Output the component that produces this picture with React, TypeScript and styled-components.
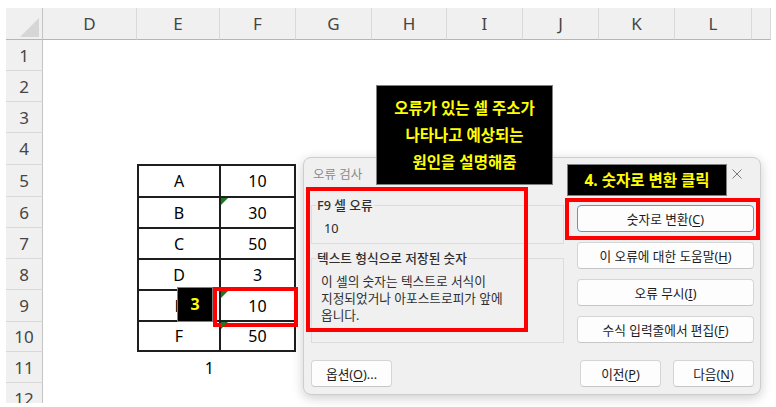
import React from "react";
import styled, { createGlobalStyle } from "styled-components";

const GlobalStyle = createGlobalStyle`
  html, body { margin: 0; padding: 0; background: #ffffff; }
  body { font-family: "Noto Sans", "Noto Sans CJK KR", sans-serif; }
  * { box-sizing: border-box; }
`;

const COLS = ["D", "E", "F", "G", "H", "I", "J", "K", "L", ""];
const ROW_H = [31, 31, 31, 32, 32, 31, 31, 31, 32, 30, 31, 31];

const Page = styled.div`
  position: relative;
  width: 776px;
  height: 407px;
  overflow: hidden;
  background: #ffffff;
  padding: 8px 0 0 6px;
`;

const Sheet = styled.div`
  display: grid;
  grid-template-columns: 37px 94px 83px 76px 76px 75px 76px 76px 76px 77px 19px;
  grid-template-rows: 32px ${ROW_H.map((h) => h + "px").join(" ")};
  width: 765px;
  height: 395px;
  overflow: hidden;
  font-family: "Noto Sans", sans-serif;
`;

const Corner = styled.div`
  grid-column: 1;
  grid-row: 1;
  background: #f0f0f0;
  border-right: 1px solid #c4c4c4;
  border-bottom: 1px solid #b5b5b5;
  display: flex;
  align-items: flex-end;
  justify-content: flex-end;
  padding: 0 3px 2px 0;
`;

const ColHeader = styled.div<{ $col: number }>`
  grid-column: ${(p) => p.$col};
  grid-row: 1;
  background: #f0f0f0;
  border-bottom: 1px solid #b5b5b5;
  border-right: 1px solid #d9d9d9;
  display: flex;
  align-items: center;
  justify-content: center;
  font-size: 17px;
  color: #454545;
`;

const RowHeader = styled.div<{ $row: number }>`
  grid-column: 1;
  grid-row: ${(p) => p.$row};
  background: #f0f0f0;
  border-right: 1px solid #c4c4c4;
  border-bottom: 1px solid #d9d9d9;
  display: flex;
  align-items: center;
  justify-content: center;
  font-size: 17px;
  color: #454545;
`;

const DataTable = styled.div`
  grid-column: 3 / 5;
  grid-row: 6 / 12;
  margin-top: -1px;
  display: grid;
  grid-template-columns: 82px 75px;
  grid-template-rows: 32px 31px 31px 31px 31px 30px;
  border-top: 2px solid #1e1e1e;
  border-left: 2px solid #1e1e1e;
`;

const Cell = styled.div<{ $flag?: boolean }>`
  position: relative;
  border-right: 2px solid #1e1e1e;
  border-bottom: 2px solid #1e1e1e;
  display: flex;
  align-items: center;
  justify-content: center;
  font-size: 16px;
  color: #000;
  &::before {
    content: "";
    display: ${(p) => (p.$flag ? "block" : "none")};
    position: absolute;
    left: 0;
    top: 0;
    width: 0;
    height: 0;
    z-index: 3;
    border-top: 7px solid #1f7a1f;
    border-right: 7px solid transparent;
  }
`;

const Total = styled.div`
  grid-column: 3;
  grid-row: 12;
  display: flex;
  align-items: center;
  justify-content: flex-end;
  padding-right: 6px;
  font-size: 16px;
  color: #000;
`;

const Dialog = styled.div`
  position: absolute;
  left: 303px;
  top: 157px;
  width: 458px;
  height: 238px;
  background: #f0f0f0;
  border: 1px solid #cdcdcd;
  border-radius: 8px;
  box-shadow: 0 3px 12px rgba(0, 0, 0, 0.2);
  display: flex;
  flex-direction: column;
  font-family: "Noto Sans", "Noto Sans CJK KR", sans-serif;
  font-size: 12.7px;
  color: #1f1f1f;
  z-index: 1;
`;

const TitleBar = styled.div`
  height: 31px;
  display: flex;
  align-items: center;
  justify-content: space-between;
  padding: 0 18px 0 9px;
  color: #8a8a8a;
  font-size: 12.5px;
`;

const Body = styled.div`
  display: grid;
  grid-template-columns: 253px 177px;
  column-gap: 13px;
  padding: 0 6px 0 7px;
  margin-top: 16px;
`;

const LeftCol = styled.div`
  display: flex;
  flex-direction: column;
  gap: 14px;
`;

const GroupBox = styled.div<{ $h: number }>`
  height: ${(p) => p.$h}px;
  border: 1px solid #dcdcdc;
`;

const Legend = styled.div`
  width: fit-content;
  margin: -9px 0 0 4px;
  padding: 0 1px;
  background: #f0f0f0;
  line-height: 17px;
  font-weight: 500;
  color: #2e2e2e;
`;

const Value = styled.div`
  margin: 6px 0 0 12px;
  line-height: 17px;
  color: #2a2a2a;
`;

const Description = styled.div`
  margin: 6px 0 0 9px;
  line-height: 17px;
  color: #2f2f2f;
`;

const ButtonStack = styled.div`
  display: flex;
  flex-direction: column;
  gap: 10px;
`;

const Button = styled.button<{ $primary?: boolean }>`
  height: 27px;
  width: 100%;
  padding: 0;
  background: #fdfdfd;
  border: 1px solid ${(p) => (p.$primary ? "#4f9be0" : "#d5d5d5")};
  border-bottom-color: ${(p) => (p.$primary ? "#4f9be0" : "#c6c6c6")};
  border-radius: 4px;
  font: inherit;
  color: #1b1b1b;
  display: flex;
  align-items: center;
  justify-content: center;
`;

const FooterButton = styled(Button)`
  width: 81px;
`;

const Footer = styled.div`
  margin-top: auto;
  display: flex;
  justify-content: space-between;
  padding: 0 6px 7px 7px;
`;

const FooterGroup = styled.div`
  display: flex;
  gap: 12px;
`;

const Accel = styled.span`
  text-decoration: underline;
  text-underline-offset: 2px;
`;

const Callout = styled.div<{ $x: number; $y: number; $w: number; $h: number; $size: number }>`
  position: absolute;
  left: ${(p) => p.$x}px;
  top: ${(p) => p.$y}px;
  width: ${(p) => p.$w}px;
  height: ${(p) => p.$h}px;
  background: #000;
  border: 1px solid #808080;
  color: #ffff00;
  font-family: "Noto Sans", "Noto Sans CJK KR", sans-serif;
  font-weight: 700;
  font-size: ${(p) => p.$size}px;
  line-height: 27px;
  display: flex;
  flex-direction: column;
  align-items: center;
  justify-content: center;
  white-space: nowrap;
  z-index: 3;
`;

const RedBox = styled.div<{ $x: number; $y: number; $w: number; $h: number }>`
  position: absolute;
  left: ${(p) => p.$x}px;
  top: ${(p) => p.$y}px;
  width: ${(p) => p.$w}px;
  height: ${(p) => p.$h}px;
  border: 4px solid #ff0000;
  z-index: 2;
`;

const tableRows: [string, string, boolean][] = [
  ["A", "10", false],
  ["B", "30", true],
  ["C", "50", false],
  ["D", "3", false],
  ["E", "10", true],
  ["F", "50", true],
];

export default function App() {
  return (
    <>
      <GlobalStyle />
      <Page>
        <Sheet>
          <Corner>
            <svg width="19" height="19" viewBox="0 0 19 19">
              <polygon points="19,0 19,19 0,19" fill="#d6d6d6" />
            </svg>
          </Corner>
          {COLS.map((c, i) => (
            <ColHeader key={i} $col={i + 2}>
              {c}
            </ColHeader>
          ))}
          {ROW_H.map((_, i) => (
            <RowHeader key={i} $row={i + 2}>
              {i + 1}
            </RowHeader>
          ))}
          <DataTable>
            {tableRows.map(([k, v, flag]) => (
              <React.Fragment key={k}>
                <Cell>{k}</Cell>
                <Cell $flag={flag}>{v}</Cell>
              </React.Fragment>
            ))}
          </DataTable>
          <Total>1</Total>
        </Sheet>

        <Dialog>
          <TitleBar>
            <span>오류 검사</span>
            <svg width="10" height="10" viewBox="0 0 10 10">
              <path d="M0.5 0.5 L9.5 9.5 M9.5 0.5 L0.5 9.5" stroke="#7a7a7a" strokeWidth="1" />
            </svg>
          </TitleBar>
          <Body>
            <LeftCol>
              <GroupBox $h={39}>
                <Legend>F9 셀 오류</Legend>
                <Value>10</Value>
              </GroupBox>
              <GroupBox $h={85}>
                <Legend>텍스트 형식으로 저장된 숫자</Legend>
                <Description>
                  이 셀의 숫자는 텍스트로 서식이
                  <br />
                  지정되었거나 아포스트로피가 앞에
                  <br />
                  옵니다.
                </Description>
              </GroupBox>
            </LeftCol>
            <ButtonStack>
              <Button $primary>
                숫자로 변환(<Accel>C</Accel>)
              </Button>
              <Button>
                이 오류에 대한 도움말(<Accel>H</Accel>)
              </Button>
              <Button>
                오류 무시(<Accel>I</Accel>)
              </Button>
              <Button>
                수식 입력줄에서 편집(<Accel>F</Accel>)
              </Button>
            </ButtonStack>
          </Body>
          <Footer>
            <FooterButton>
              옵션(<Accel>O</Accel>)...
            </FooterButton>
            <FooterGroup>
              <FooterButton>
                이전(<Accel>P</Accel>)
              </FooterButton>
              <FooterButton>
                다음(<Accel>N</Accel>)
              </FooterButton>
            </FooterGroup>
          </Footer>
        </Dialog>

        <RedBox $x={306} $y={187} $w={222} $h={145} />
        <RedBox $x={565} $y={198} $w={195} $h={42} />
        <RedBox $x={213} $y={287} $w={85} $h={40} />

        <Callout $x={376} $y={85} $w={177} $h={100} $size={15.5}>
          <span>오류가 있는 셀 주소가</span>
          <span>나타나고 예상되는</span>
          <span>원인을 설명해줌</span>
        </Callout>
        <Callout $x={567} $y={164} $w={160} $h={32} $size={15.5}>
          <span>4. 숫자로 변환 클릭</span>
        </Callout>
        <Callout $x={177} $y={287} $w={36} $h={35} $size={16}>
          <span>3</span>
        </Callout>
      </Page>
    </>
  );
}
